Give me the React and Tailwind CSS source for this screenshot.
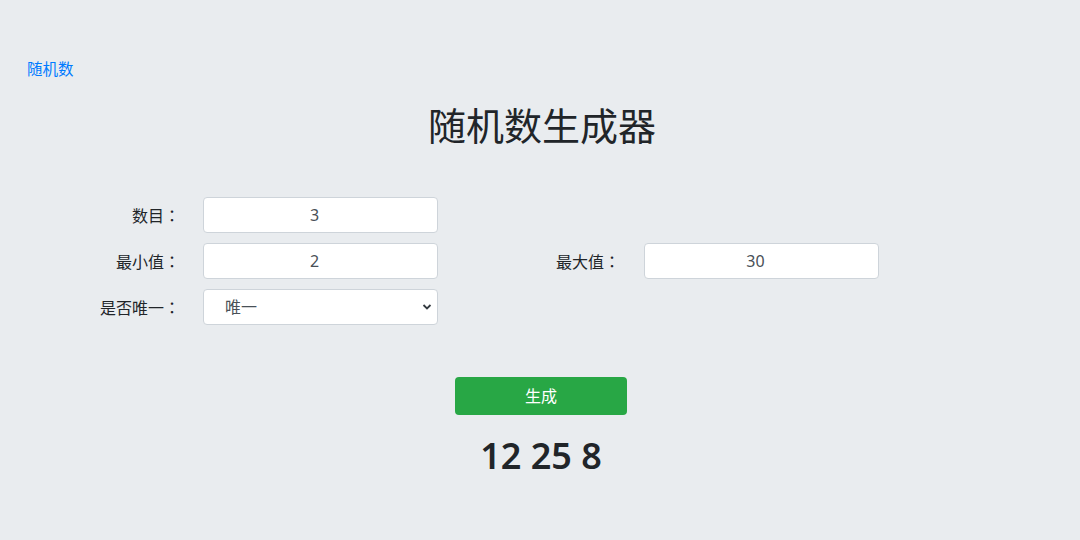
import React from "react";

function Colon() {
  return <span className="font-['Noto_Sans_CJK_TC',sans-serif]">：</span>;
}

function Label({ children }) {
  return (
    <div className="w-[122px] text-right text-[16px] text-[#212529] leading-6 pr-0">
      {children}
      <Colon />
    </div>
  );
}

function Input({ value }) {
  return (
    <input
      readOnly
      value={value}
      className="w-[235px] h-[36px] bg-white border border-[#ced4da] rounded-[4px] text-center text-[16px] text-[#495057] outline-none pl-0 pr-[12px]"
    />
  );
}

export default function App() {
  return (
    <div className="min-h-[540px] w-full bg-[#e9ecef] font-['Noto_Sans','Noto_Sans_CJK_SC',sans-serif] text-[#212529]">
      <div className="pt-[57px] pl-[27px]">
        <a className="text-[15.5px] leading-6 text-[#007bff]">随机数</a>
      </div>
      <h1 className="mt-[20px] text-center text-[38px] leading-[48px] font-normal pl-[4px]">随机数生成器</h1>
      <div className="mt-[48px] flex flex-col gap-[10px] pl-[58px]">
        <div className="flex items-center">
          <Label>数目</Label>
          <div className="w-[23px]" />
          <Input value="3" />
        </div>
        <div className="flex items-center">
          <Label>最小值</Label>
          <div className="w-[23px]" />
          <Input value="2" />
          <div className="w-[60px]" />
          <Label>最大值</Label>
          <div className="w-[24px]" />
          <Input value="30" />
        </div>
        <div className="flex items-center">
          <Label>是否唯一</Label>
          <div className="w-[23px]" />
          <div className="relative w-[235px] h-[36px] bg-white border border-[#ced4da] rounded-[4px] flex items-center pl-[21px] text-[16px] text-[#495057]">
            <span>唯一</span>
            <svg className="absolute right-[5px] top-[13px]" width="10" height="8" viewBox="0 0 10 8">
              <path d="M1.5 2 L5 5.5 L8.5 2" fill="none" stroke="#343a40" strokeWidth="1.8" />
            </svg>
          </div>
        </div>
      </div>
      <div className="mt-[52px] flex justify-center pl-[2px]">
        <button className="w-[172px] h-[38px] bg-[#28a745] text-white text-[16px] rounded-[4px]">生成</button>
      </div>
      <div className="mt-[19px] text-center text-[36px] leading-[44px] font-semibold pl-[2px]">12 25 8</div>
    </div>
  );
}
